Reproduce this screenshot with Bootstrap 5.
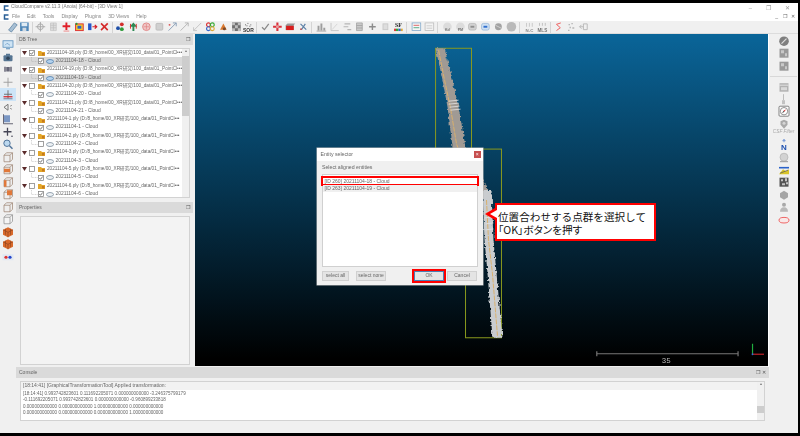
<!DOCTYPE html>
<html lang="ja">
<head>
  <meta charset="UTF-8" />
  <meta name="viewport" content="width=device-width, initial-scale=1" />
  <title>CloudCompare - Entity selector</title>
  <link href="https://cdn.jsdelivr.net/npm/bootstrap@5.3.3/dist/css/bootstrap.min.css" rel="stylesheet" />
  <style>
    html, body { margin: 0; height: 436px; overflow: hidden; background: #000; }
    body, .btn, .list-group { font-family: "Liberation Sans", "Noto Sans CJK JP", sans-serif; }
    #stage { width: 800px; height: 436px; background: #000; }
    #app { position: absolute; inset: 3px 2px 3px 0; background: #f0f0f0; color: #555; font-size: 5px; line-height: 1; }
    .soft { filter: blur(.4px); }

    /* title + menu */
    .title-bar { height: 9px; background: #fff; padding: 0 3px; color: #777; font-size: 4.85px; }
    .title-bar span { margin-left: 2px; }
    .win-btns { gap: 12px; margin-left: auto; padding-right: 5px; color: #999; font-size: 6px; }
    .menu-bar { height: 9px; background: #fff; padding: 0 3px; color: #888; font-size: 5px; }
    .menu-bar .menu-logo { margin-right: 3px; }
    .menu-bar .menu-item { margin-right: 7px; }
    .mdi-btns { margin-left: auto; gap: 4.5px; color: #666; font-size: 5px; }

    /* toolbars */
    .top-tools { height: 13px; padding-left: 5.5px; border-bottom: 1px solid #dcdcdc; background: #f0f0f0; }
    .top-tools svg { width: 12.8px; height: 11.5px; flex: none; }
    .tb-sep { width: 3.3px; height: 11px; flex: none; position: relative; }
    .tb-sep::after { content: ""; position: absolute; left: 1.2px; top: 0; bottom: 0; width: 1px; background: #d4d4d4; }
    .tb-sep.wide { width: 5.3px; }
    .side-tools { width: 16px; flex: none; padding-top: 4px; }
    .side-tools svg { width: 12px; height: 12.5px; display: block; }
    .side-tools .side-icon { height: 12.5px; padding: 0 2px; }
    .side-tools .side-icon.active { background: #cde4f7; }
    .right-tools { width: 30px; flex: none; padding-top: 1px; border-left: 1px solid #fff; }
    .right-tools svg { width: 12px; height: 12.4px; display: block; margin: 0 auto; }
    .right-sep { height: 1px; margin: 3.5px 1px 4px; background: #d8d8d8; }
    .filter-label { height: 9px; text-align: center; color: #aaa; font-size: 4.8px; font-style: italic; }

    /* panels */
    .work-row { height: 333px; }
    .side-panel { width: 179px; flex: none; padding-right: 2px; }
    .dock-head { height: 11px; background: #dadada; padding: 0 3px; color: #666; font-size: 5px; }
    .dock-head .dock-icons { margin-left: auto; gap: 2px; color: #555; font-size: 5px; }
    .tree-box { height: 150px; margin: 3px 3px 4px 4px; background: #fff; border: 1px solid #d2d2d2; overflow: hidden; }
    .tree-rows { margin-top: 0; }
    .tree-row { height: 8.3px; white-space: nowrap; font-size: 4.7px; color: #666; }
    .tree-row.kid { font-size: 4.9px; }
    .tree-row.on { background: #d9d9d9; }
    .tree-row svg { flex: none; }
    .tree-scroll { width: 7px; flex: none; background: #f0f0f0; color: #777; font-size: 4px; text-align: center; }
    .scroll-thumb { height: 60px; margin-top: 3px; background: #cdcdcd; }
    .gap-arrow { width: 1px; flex: none; }
    .gap-2px { width: 2px; flex: none; }
    .gap-wide { width: 2.5px; flex: none; }
    .gap-tiny { width: 1.5px; flex: none; }
    .gap-kid { width: 10px; flex: none; }
    .prop-box { height: 149px; margin: 3px 3px 3px 4px; background: #f3f3f3; border: 1px solid #d2d2d2; }

    /* 3D view */
    .view-3d { flex: 1; background: linear-gradient(#0a6599, #000 98%); margin-bottom: 1px; }
    .view-art { position: absolute; inset: 0; width: 100%; height: 100%; }

    /* console */
    .console-area { margin: 0 29px 0 16px; }
    .console-box { height: 40px; margin: 3px 4px 0 4px; background: #fff; border: 1px solid #d2d2d2; color: #666; font-size: 4.55px; }
    .console-first { height: 7.5px; padding-left: 2px; background: #f2f2f2; font-size: 5px; }
    .console-lines { padding: 1.6px 0 0 2px; line-height: 6.3px; white-space: nowrap; }
    .console-scroll { width: 7px; flex: none; background: #f0f0f0; color: #777; font-size: 4px; text-align: center; }
    .console-thumb { height: 7px; margin-top: 20px; background: #cdcdcd; }

    /* dialog */
    #entityDlg { position: absolute; left: 317px; top: 148px; width: 166px; height: 137px; background: #f0f0f0; border: 0; box-shadow: 0 0 0 .5px #bbb; color: #555; font-size: 5.2px; line-height: 1; }
    .dlg-title { height: 13px; padding: 0 2px 0 3.5px; background: #fff; color: #666; }
    .dlg-close { width: 7.5px; height: 7.5px; margin-left: auto; background: #c75050; color: #fff; font-size: 5px; border: 0; padding: 0; line-height: 7px; }
    .dlg-label { height: 13px; padding-left: 5px; padding-top: 4px; color: #666; }
    .entity-list { height: 93px; margin: 0 5px; padding-top: 2.5px; background: #fff; border: 1px solid #d0d0d0; border-radius: 0; display: block; }
    .entity-list .list-group-item { height: 6px; padding: 0 1.5px; border: 0; border-radius: 0; font-size: 5px; line-height: 6px; color: #666; background: #fff; }
    .entity-list .list-group-item.picked { outline: 2px solid #f00; margin-bottom: 1px; }
    .entity-list .list-group-item.other { height: 7px; background: #f0f0f0; line-height: 7px; }
    .dlg-foot { padding: 4px 6px 0 5px; }
    .dlg-btn { width: 27px; height: 9.5px; padding: 0; margin-right: 7px; border: 1px solid #d0d0d0; border-radius: 0; background: #e4e4e4; color: #666; font-size: 5px; line-height: 7px; }
    .dlg-btn.none-btn { width: 30px; margin-right: 0; }
    .dlg-btn.ok-btn { width: 30px; margin: 0 3px 0 auto; border-color: #4a7fb5; outline: 2px solid #f00; }
    .dlg-btn.cancel-btn { width: 30px; margin-right: 0; }

    /* callout */
    #callout { position: absolute; left: 495px; top: 203px; width: 161px; height: 38px; padding: 4.5px 1px; background: #fff; border: 2px solid #f00; color: #111; font-family: "Noto Sans CJK JP", "Liberation Sans", sans-serif; font-size: 10.6px; line-height: 13px; white-space: nowrap; }
    #callout .line-two { font-feature-settings: "palt"; }
    #callout::before { content: ""; position: absolute; left: -12px; top: 3px; border-style: solid; border-width: 6px 10px 6px 0; border-color: transparent #f00 transparent transparent; }
    #callout::after { content: ""; position: absolute; left: -7px; top: 5px; border-style: solid; border-width: 4px 7px 4px 0; border-color: transparent #fff transparent transparent; }
  </style>
</head>
<body>

<div id="stage" class="position-relative">

  <div id="app" class="d-flex flex-column soft">

    <!-- Title + menu -->
    <div class="title-bar d-flex align-items-center">
      <svg width="6" height="6" viewBox="0 0 6 6"><path d="M5.500 1H1.500v4h4" fill="none" stroke="#2a5f96" stroke-width="1.500"/></svg>
      <span>CloudCompare v2.11.3 (Anoia) [64-bit] - [3D View 1]</span>
      <div class="win-btns d-flex"><span>–</span><span>❐</span><span>✕</span></div>
    </div>
    <div class="menu-bar d-flex align-items-center">
      <svg class="menu-logo" width="6" height="6" viewBox="0 0 6 6"><path d="M5.500 1H1.500v4h4" fill="none" stroke="#2a5f96" stroke-width="1.500"/></svg>
      <span class="menu-item">File</span><span class="menu-item">Edit</span><span class="menu-item">Tools</span><span class="menu-item">Display</span><span class="menu-item">Plugins</span><span class="menu-item">3D Views</span><span class="menu-item">Help</span>
      <div class="mdi-btns d-flex"><span>_</span><span>❐</span><span>✕</span></div>
    </div>

    <!-- Main toolbar, filled in by script -->
    <div id="topTools" class="top-tools d-flex align-items-center"></div>

    <div class="work-row d-flex">
      <div id="leftTools" class="side-tools"></div>

      <div class="side-panel">
        <div class="dock-head d-flex align-items-center">DB Tree<div class="dock-icons d-flex"><span>❐</span></div></div>
        <div class="tree-box d-flex">
          <div id="treeRows" class="tree-rows flex-grow-1"></div>
          <div class="tree-scroll">▴<div class="scroll-thumb"></div></div>
        </div>
        <div class="dock-head d-flex align-items-center">Properties<div class="dock-icons d-flex"><span>❐</span></div></div>
        <div class="prop-box"></div>
      </div>

      <div class="view-3d position-relative">
        <svg class="view-art" viewBox="195 34 574 332">
          <defs>
            <filter id="rough" x="-30%" y="-5%" width="160%" height="110%">
              <feTurbulence type="fractalNoise" baseFrequency=".35" numOctaves="2" seed="4"/>
              <feDisplacementMap in="SourceGraphic" scale="4" xChannelSelector="R" yChannelSelector="G"/>
            </filter>
          </defs>
          <g fill="none" stroke="#8a9a1e" stroke-width="1">
            <rect x="436" y="48" width="36" height="110"/>
            <rect x="466" y="149" width="36" height="189"/>
          </g>
          <g filter="url(#rough)">
            <path d="M436 48 445 48 453 80 459 107 466 147 478 170 492 197 483 197 470 170 453 147 448 107 443 80z" fill="#a09a94"/>
            <path d="M483 190 492 190 494 240 497 273 503 338 493 338 488 273 485 240z" fill="#c9cccf"/>
          </g>
          <g fill="none">
            <path d="M439 50l6 30 6 28 6 36 10 26M487 200l2 40 4 34 5 62" stroke="#d9b06c" stroke-width="1" stroke-dasharray="5 1"/>
            <path d="M449 101l10-1M449 104l10-1M450 107l10-1M451 110l10-1M485 218l8-1M486 224l8-1M486 230l8-1" stroke="#e2e2e2" stroke-width=".8"/>
          </g>
          <path d="M597.500 351.500v5M739 351.500v5M597.500 354h141.500" stroke="#777" stroke-width="1.200"/>
          <text x="667" y="363" text-anchor="middle" fill="#bbb" font-family="Liberation Mono, monospace" font-size="7.500">35</text>
          <path d="M753.500 344v10.500" stroke="#1fae3f" stroke-width="1.200"/>
          <path d="M753.500 354.500h11.500" stroke="#c2222a" stroke-width="1.200"/>
          <circle cx="753.500" cy="354.500" r=".9" fill="#2a6fd0"/>
        </svg>
      </div>

      <div id="rightTools" class="right-tools"></div>
    </div>

    <!-- Console -->
    <div class="console-area">
      <div class="dock-head d-flex align-items-center">Console<div class="dock-icons d-flex"><span>❐</span><span>✕</span></div></div>
      <div class="console-box d-flex">
        <div class="flex-grow-1">
          <div class="console-first d-flex align-items-center">[18:14:41] [GraphicalTransformationTool] Applied transformation:</div>
          <div class="console-lines">
            [18:14:41] 0.993742823601 0.111692205071 0.000000000000 -3.246375799179<br>
            -0.111692205071 0.993742823601 0.000000000000 -0.960899233818<br>
            0.000000000000 0.000000000000 1.000000000000 0.000000000000<br>
            0.000000000000 0.000000000000 0.000000000000 1.000000000000
          </div>
        </div>
        <div class="console-scroll">▴<div class="console-thumb"></div></div>
      </div>
    </div>
  </div>

  <!-- Entity selector dialog -->
  <div id="entityDlg" class="soft d-flex flex-column">
    <div class="dlg-title d-flex align-items-center">Entity selector<button class="dlg-close" type="button">×</button></div>
    <div class="dlg-label">Select aligned entities</div>
    <ul class="list-group entity-list">
      <li class="list-group-item picked">[ID 260] 20211104-18 - Cloud</li>
      <li class="list-group-item other">[ID 263] 20211104-19 - Cloud</li>
    </ul>
    <div class="dlg-foot d-flex">
      <button class="btn dlg-btn" type="button">select all</button>
      <button class="btn dlg-btn none-btn" type="button">select none</button>
      <button class="btn dlg-btn ok-btn" type="button">OK</button>
      <button class="btn dlg-btn cancel-btn" type="button">Cancel</button>
    </div>
  </div>

  <!-- Callout -->
  <div id="callout">位置合わせする点群を選択して<br><span class="line-two">「OK」ボタンを押す</span></div>
</div>

<script src="https://cdn.jsdelivr.net/npm/bootstrap@5.3.3/dist/js/bootstrap.bundle.min.js"></script>
<script>
  // Small icon shapes, 12x12 box
  const G = "#a9a9a9", D = "#8c8c8c";
  const word = (t, c, s) => `<text x="6" y="6" text-anchor="middle" fill="${c}" font-size="${s}" font-weight="700" font-family="Liberation Serif, serif">${t}</text>`;
  const cubeBase = `<path d="M2 4h6v6.500H2zM2 4l2.500-2.500h6V8L8 10.500M8 4l2.500-2.500" fill="#eee" stroke="#9a7f6d" stroke-width=".7"/>`;
  const shapes = {
    open: `<path d="M2 9.500 8 2l3 2-6 7.500z" fill="#a7bfd4" stroke="#5f84a4" stroke-width=".8"/>`,
    save: `<rect x="1.500" y="1.500" width="9" height="9" fill="#4d86b8"/><rect x="3" y="2" width="6" height="3.500" fill="#dfeaf3"/><rect x="4" y="7" width="4" height="3.500" fill="#cfd9e2"/>`,
    target: `<circle cx="6" cy="6" r="3" fill="none" stroke="${G}"/><path d="M6 1v10M1 6h10" stroke="${G}"/>`,
    grid: `<path d="M3 2h6v8H3zM3 4.500h6M3 7h6M6 2v8" fill="#ddd" stroke="#c0c0c0" stroke-width=".7"/>`,
    cross: `<path d="M6 1.500v8M2 5.500h8" stroke="#e0202a" stroke-width="2"/><path d="M3 10.500h6" stroke="#e88" stroke-width="1"/>`,
    colorbox: `<rect x="2" y="3" width="8" height="7" fill="#f4c430" stroke="#d33" stroke-width="1"/><rect x="4" y="5" width="4" height="3" fill="#2a62c9"/><circle cx="3" cy="3" r="1.100" fill="#2a9a3a"/>`,
    arrows: `<rect x="1.500" y="2.500" width="3.500" height="7" fill="#2457c9"/><path d="M6 6h4M8.500 4l2 2-2 2" stroke="#d3202a" fill="none" stroke-width="1.300"/>`,
    redx: `<path d="M2.500 2.500l7 7M9.500 2.500l-7 7" stroke="#d42a2a" stroke-width="1.700"/>`,
    balls: `<circle cx="7.500" cy="3.500" r="2" fill="#d3302c"/><circle cx="3.500" cy="7.500" r="2" fill="#1f4fa8"/><circle cx="7.500" cy="8.500" r="2" fill="#2f9a3a"/>`,
    tree: `<path d="M6 1.500 10 6H7v4.500H5V6H2z" fill="#2f8a55"/><path d="M3 3v5M9 3v5" stroke="#d33" stroke-width="1"/>`,
    pink: `<circle cx="6" cy="6" r="4" fill="#f0c6c6" stroke="#d77" stroke-width=".8"/><path d="M3 6h6M6 3v6" stroke="#d77" stroke-width=".6"/>`,
    graysq: `<rect x="2.500" y="2.500" width="7" height="7" rx="1" fill="#d0d0d0" stroke="#bdbdbd"/>`,
    diag1: `<path d="M2 10 10 2M6.500 2H10v3.500" fill="none" stroke="#8aa0b8" stroke-width="1"/><circle cx="3" cy="4" r="1" fill="#d55"/>`,
    diag2: `<path d="M2 10 10 2M6.500 2H10v3.500" fill="none" stroke="#b5b5b5" stroke-width="1"/>`,
    diag3: `<path d="M2 10 10 2M2 6.500V10h3.500" fill="none" stroke="#c5c5c5" stroke-width="1"/>`,
    rainbow: `<circle cx="4" cy="4" r="2" fill="none" stroke="#d33" stroke-width="1.200"/><circle cx="8" cy="4" r="2" fill="none" stroke="#3a3" stroke-width="1.200"/><circle cx="4" cy="8" r="2" fill="none" stroke="#36c" stroke-width="1.200"/><circle cx="8" cy="8" r="2" fill="none" stroke="#da3" stroke-width="1.200"/>`,
    hex: `<path d="M6 2.500 9.500 9h-7z" fill="#d9782e"/><circle cx="7" cy="8" r="1.600" fill="#7a4a2a"/>`,
    checker: `<rect x="1.500" y="1.500" width="9" height="9" fill="#6f6f6f"/><path d="M1.500 1.500h3v3h-3zM7.500 1.500h3v3h-3zM4.500 4.500h3v3h-3zM1.500 7.500h3v3h-3zM7.500 7.500h3v3h-3z" fill="#bdbdbd"/>`,
    sor: `<path d="M2.500 4h1M5 2.500h1M8 4h1M4 5h1M7 5.500h1" stroke="#666"/><text x="6" y="11" text-anchor="middle" fill="#333" font-size="5.200" font-weight="700" font-family="Liberation Sans, sans-serif">SOR</text>`,
    tick: `<path d="M2.500 6.500 5 9l4.500-6" fill="none" stroke="#888" stroke-width="1.300"/>`,
    move: `<path d="M6 1.500v9M1.500 6h9" stroke="#d9303a" stroke-width="2.200"/><circle cx="6" cy="6" r="1.500" fill="#e8a0a0"/>`,
    redcube: `<path d="M3 2.500h8l-1.500 2v5H1v-5z" fill="#9a9a9a"/><rect x="1.500" y="5" width="8" height="4.500" fill="#d91d1d"/>`,
    tools: `<path d="M3 3l6 6M8 3 4 9" stroke="#5b7fa5" stroke-width="1.200"/><circle cx="3.500" cy="8.500" r="1" fill="#b55"/>`,
    hist: `<path d="M2 10V5h2v5zM5 10V2.500h2V10zM8 10V7h2v3z" fill="#9d9d9d"/><path d="M1 10.500h10" stroke="#888" stroke-width=".7"/>`,
    axes: `<path d="M2.500 2v8h8" fill="none" stroke="#c5c5c5"/><path d="M3.500 9 9 3" stroke="#d5d5d5"/>`,
    bars: `<path d="M3 3h6M2 6h5M6 9h4" stroke="#b5b5b5" stroke-width="1.300"/>`,
    table: `<path d="M3 2h6v8H3zM3 4.700h6M3 7.300h6" fill="#c9c9c9" stroke="#9f9f9f" stroke-width=".8"/>`,
    plus: `<path d="M6 2.500v7M2.500 6h7" stroke="${D}" stroke-width="1.500"/>`,
    block: `<rect x="3.500" y="3" width="5" height="6" fill="#ddd" stroke="#c9c9c9"/>`,
    sf: word("SF", "#222", 6.200) + `<path d="M1.500 8h2v2.500h-2z" fill="#d33"/><path d="M3.500 8h2.500v2.500H3.500z" fill="#3a3"/><path d="M6 8h2.500v2.500H6z" fill="#36c"/><path d="M8.500 8h2v2.500h-2z" fill="#da3"/>`,
    scalar1: `<rect x="1.500" y="2" width="9" height="8" fill="#f6f6f6" stroke="#7fa6c9" stroke-width=".8"/><path d="M3 4.500h6" stroke="#d66"/><path d="M3 7h6" stroke="#5a8"/>`,
    scalar2: `<rect x="1.500" y="2" width="9" height="8" fill="#f4f4f4" stroke="#bbb" stroke-width=".8"/><path d="M3 5h6M3 7.500h6" stroke="#ccc"/>`,
    kd: `<circle cx="6" cy="6" r="4.500" fill="#dcdcdc"/><text x="6" y="10" text-anchor="middle" fill="#777" font-size="3.800" font-weight="700">Kd</text>`,
    pm: `<circle cx="6" cy="6" r="4.500" fill="#dcdcdc"/><text x="6" y="10" text-anchor="middle" fill="#777" font-size="3.800" font-weight="700">PM</text>`,
    cam: `<rect x="2" y="2.500" width="8" height="7" rx="2" fill="#d2d2d2" stroke="#aaa" stroke-width=".6"/><rect x="4" y="5" width="4" height="2" fill="#8f8f8f"/>`,
    bluecam: `<rect x="2" y="2.500" width="8" height="7" rx="2" fill="#cfe0f2" stroke="#7fa6d0" stroke-width=".6"/><rect x="4" y="5" width="4" height="2" fill="#2f6fd0"/>`,
    ball: `<circle cx="6" cy="6" r="3.600" fill="#a2a2a2"/><path d="M3 4.500 9 7.500" stroke="#ddd" stroke-width=".8"/>`,
    bigball: `<circle cx="6" cy="6" r="5" fill="#b9b9b9"/>`,
    nc: `<path d="M3 2v4M6 2v4M9 2v4" stroke="#c9c9c9"/><text x="6" y="11" text-anchor="middle" fill="#888" font-size="4.600" font-weight="700" font-family="Liberation Sans, sans-serif">N-C</text>`,
    mls: `<path d="M3 2v3M6 2v3M9 2v3" stroke="#c0c0c0"/><text x="6" y="11" text-anchor="middle" fill="#777" font-size="4.800" font-weight="700" font-family="Liberation Sans, sans-serif">MLS</text>`,
    sred: `<path d="M8.500 2 4 3.500 8 7 4 10" fill="none" stroke="#ee5a5a" stroke-width="1"/>`,
    scat: `<path d="M3 3h1.500v1.500H3zM6 2h1.500v1.500H6zM4 6h1.500v1.500H4zM2.500 9H4v1.500H2.500zM7 6.500h2V8H7z" fill="#b5b5b5"/>`,
    back: `<path d="M10 3v6H6V3zM6 6H2M4 4 2 6l2 2" fill="none" stroke="#b9b9b9"/>`,
    // left bar
    screen: `<rect x="1" y="2.500" width="10" height="6.500" fill="#cfe4f4" stroke="#5a8fbd" stroke-width=".8"/><path d="M3 7l2-2 3 2" stroke="#5a8fbd" fill="none" stroke-width=".6"/><path d="M4 10.500h4" stroke="#5a8fbd"/>`,
    camera: `<rect x="1.500" y="4" width="9" height="6" rx="1" fill="#567592"/><rect x="4" y="2.500" width="4" height="2" fill="#567592"/><circle cx="6" cy="7" r="1.800" fill="#2f4358"/>`,
    ortho: `<path d="M3 3.500v5M9 3.500v5M5 4.500h2v3H5z" fill="#667" stroke="#667" stroke-width="1.500"/>`,
    thin: `<path d="M6 1.500v9M1.500 6h9" stroke="#9a9a9a" stroke-width=".9"/>`,
    redline: `<path d="M6 2v8M2 6h8" stroke="#666" stroke-width=".9"/><path d="M1.500 8.500h9" stroke="#d22" stroke-width="1.200"/><path d="M1.500 10.500h9" stroke="#667" stroke-width=".8"/>`,
    light: `<path d="M2 6 6 3v6z" fill="none" stroke="#777" stroke-width="1"/><path d="M8 5l2-1M8 7l2 1" stroke="#777" stroke-width=".7"/>`,
    blueaxes: `<rect x="2" y="2" width="6" height="7" fill="#7b97c4"/><path d="M1.500 1v9.500h9.500" fill="none" stroke="#445" stroke-width=".8"/>`,
    dpad: `<path d="M5.500 1.500v8M1.500 5.500h8" stroke="#445" stroke-width="1.300"/><circle cx="10" cy="10" r=".8" fill="#445"/>`,
    zoom: `<circle cx="5" cy="5" r="3.200" fill="#bcd8ef" stroke="#51749a" stroke-width="1"/><path d="M7.500 7.500l3 3" stroke="#51749a" stroke-width="1.500"/>`,
    cube1: cubeBase,
    cube2: cubeBase + `<rect x="2" y="5.500" width="6" height="3.500" fill="#e0783a"/>`,
    cube3: cubeBase + `<rect x="2" y="4" width="2.500" height="6.500" fill="#e0783a"/>`,
    cube4: cubeBase + `<rect x="5" y="2" width="5" height="5" fill="#e0783a"/>`,
    cube5: `<path d="M2 4h6v6.500H2zM2 4l2.500-2.500h6V8L8 10.500M8 4l2.500-2.500" fill="#f4f4f4" stroke="#8a8a8a" stroke-width=".7"/>`,
    orange: `<path d="M6 1 11 3.500v5L6 11 1 8.500v-5z" fill="#d8682a"/><path d="M1 3.500 6 6l5-2.500M6 6v5M3.500 2.500v6M8.500 2.500v6" stroke="#7b3a1a" stroke-width=".5" fill="none"/>`,
    dots: `<rect x=".5" y="3" width="11" height="6" fill="#e0e8f2"/><circle cx="4" cy="6" r="1.600" fill="#d33"/><circle cx="8" cy="6" r="1.600" fill="#24c"/>`,
    // right bar
    noentry: `<circle cx="6" cy="6" r="4.800" fill="#7f7f7f"/><path d="M3.500 8.500l5-5" stroke="#ddd" stroke-width="1.200"/>`,
    mosaic: `<rect x="1.500" y="1.500" width="9" height="9" fill="#9a9a9a"/><path d="M3 3h3v3H3zM7 6h2v3H7z" fill="#c9c9c9"/>`,
    film: `<rect x="1.500" y="2" width="9" height="8.500" fill="#b2b2b2"/><path d="M1.500 4h9" stroke="#eee" stroke-width=".8"/><rect x="3" y="6" width="6" height="3" fill="#d9d9d9"/>`,
    brush: `<path d="M5.500 1v6" stroke="#bcbcbc" stroke-width="1"/><path d="M4 7h3v4H4z" fill="#c2c2c2"/>`,
    compass: `<rect x="1" y="1" width="10" height="10" rx="1" fill="#fff" stroke="#666" stroke-width=".8"/><circle cx="6" cy="6" r="3.700" fill="none" stroke="#777" stroke-width=".8"/><path d="M8 4 6.500 6.500 5.500 5.500z" fill="#d33"/><path d="M4 8 6.500 6.500 5.500 5.500z" fill="#444"/>`,
    shield: `<path d="M2.500 3 6 1.500 9.500 3v3.500L6 10.500 2.500 6.500z" fill="#a9a9a9"/><circle cx="6" cy="5" r="1.500" fill="#d5d5d5"/>`,
    north: `<path d="M6 .5v2.500M4.500 1.500 6 .5l1.500 1" stroke="#2a62c9" stroke-width=".7" fill="none"/><text x="6" y="10.500" text-anchor="middle" fill="#1c4fb0" font-size="8" font-weight="700" font-family="Liberation Sans, sans-serif">N</text>`,
    globe: `<circle cx="6" cy="5" r="4" fill="#d2d2d2" stroke="#a9a9a9" stroke-width=".6"/><path d="M2 9.500h8" stroke="#999" stroke-width="1"/>`,
    map: `<path d="M1 3.500h10" stroke="#2a62c9" stroke-width="1.600"/><path d="M1 10 5 5l3 2 3-2v5z" fill="#d9c52a"/><path d="M2 9l8-3" stroke="#555" stroke-width=".7"/>`,
    noise: `<rect x="1.500" y="1.500" width="9" height="9" fill="#555"/><path d="M3 3h2v2H3zM7 2h2v3H7zM4 7h3v2H4zM8 6h2v2H8z" fill="#c5c5c5"/>`,
    octa: `<path d="M6 1.500 10 4v4l-4 2.500L2 8V4z" fill="#a5a5a5"/>`,
    people: `<circle cx="6" cy="3.500" r="2" fill="#a9a9a9"/><path d="M2 10.500c0-3 1.500-4.500 4-4.500s4 1.500 4 4.500z" fill="#b9b9b9"/>`,
    ellipse: `<ellipse cx="6" cy="6" rx="5" ry="2.800" fill="#f8e8e8" stroke="#e44" stroke-width=".8"/>`
  };
  const icon = name => `<svg viewBox="0 0 12 12">${shapes[name]}</svg>`;

  // Main toolbar: "|" is a separator, "||" a wide one
  const topList = "open save | target grid cross colorbox arrows redx | balls tree pink graysq diag1 diag2 diag3 rainbow hex checker sor | tick move redcube tools || hist axes bars table plus block sf || scalar1 scalar2 || kd pm cam bluecam ball bigball || nc mls | sred scat back".split(" ");
  document.getElementById("topTools").innerHTML = topList.map(n =>
    n === "|" ? '<div class="tb-sep"></div>' : n === "||" ? '<div class="tb-sep wide"></div>' : icon(n)
  ).join("");

  // Left toolbar
  const leftList = "screen camera ortho thin redline light blueaxes dpad zoom cube1 cube2 cube3 cube4 cube1 cube5 orange orange dots".split(" ");
  document.getElementById("leftTools").innerHTML = leftList.map(n =>
    `<div class="side-icon${n === "redline" ? " active" : ""}">${icon(n)}</div>`
  ).join("");

  // Right toolbar
  const rightList = "noentry mosaic mosaic - film brush compass shield csf north globe map noise octa people ellipse".split(" ");
  document.getElementById("rightTools").innerHTML = rightList.map(n =>
    n === "-" ? '<div class="right-sep"></div>' : n === "csf" ? '<div class="filter-label">CSF Filter</div>' : icon(n)
  ).join("");

  // DB tree rows
  const clouds = [
    { id: "18", open: true, cloud: true, sel: true },
    { id: "19", open: true, cloud: true, sel: true },
    { id: "20", open: false, cloud: true },
    { id: "21", open: false, cloud: true },
    { id: "1", open: false, cloud: true },
    { id: "2", open: false, cloud: false },
    { id: "3", open: false, cloud: true },
    { id: "5", open: false, cloud: true },
    { id: "6", open: false, cloud: true }
  ];
  const checkBox = on => `<svg width="6" height="6" viewBox="0 0 6 6"><rect x=".5" y=".5" width="5" height="5" fill="#fff" stroke="#777" stroke-width=".7"/>${on ? '<path d="M1.300 3 2.500 4.300 4.700 1.500" fill="none" stroke="#555" stroke-width=".8"/>' : ""}</svg>`;
  const arrow = '<svg width="5" height="4" viewBox="0 0 5 4"><path d="M0 0h5L2.500 4z" fill="#5a2a2a"/></svg>';
  const folder = '<svg width="7" height="6" viewBox="0 0 7 6"><path d="M0 1h3l1 1h3v4H0z" fill="#e3a72a"/><rect x="4" y="3" width="2.500" height="2.500" fill="#c77a1e"/></svg>';
  const cloudIcon = sel => `<svg width="8" height="5" viewBox="0 0 8 5"><ellipse cx="4" cy="2.500" rx="3.500" ry="2" fill="${sel ? "#b5d3ee" : "#eef2f5"}" stroke="${sel ? "#3f74a8" : "#6d7f90"}" stroke-width=".7"/></svg>`;
  const elbow = '<svg width="7" height="8.300" viewBox="0 0 7 8.300"><path d="M.5 0v4.500H7" fill="none" stroke="#aaa" stroke-width=".5" stroke-dasharray="1 .6"/></svg>';

  let html = "";
  clouds.forEach(c => {
    const name = "20211104-" + c.id;
    html += `<div class="tree-row d-flex align-items-center"><span class="gap-arrow"></span>${arrow}<span class="gap-2px"></span>${checkBox(c.open)}<span class="gap-wide"></span>${folder}<span class="gap-wide"></span>${name}.ply (D:/8_home/00_XR研究/100_data/01_PointCl•••</div>`;
    html += `<div class="tree-row kid${c.sel ? " on" : ""} d-flex align-items-center"><span class="gap-kid"></span>${elbow}${checkBox(c.cloud)}<span class="gap-2px"></span>${cloudIcon(c.sel)}<span class="gap-tiny"></span>${name} - Cloud</div>`;
  });
  document.getElementById("treeRows").innerHTML = html;
</script>
</body>
</html>
